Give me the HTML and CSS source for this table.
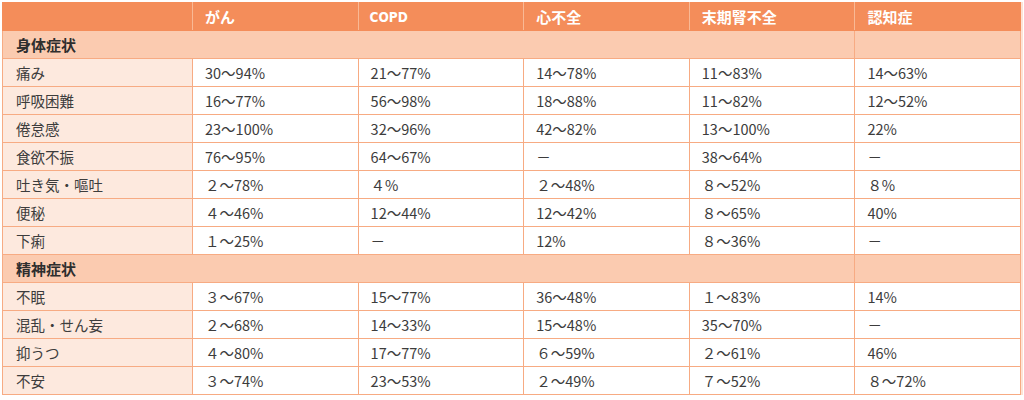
FILE: index.html
```html
<!DOCTYPE html>
<html lang="ja">
<head>
<meta charset="utf-8">
<link rel="stylesheet" href="styles.css">
</head>
<body>
<table class="symptoms">
  <colgroup>
    <col class="c-label"><col class="c-val"><col class="c-val"><col class="c-val"><col class="c-val"><col class="c-val">
  </colgroup>
  <thead>
    <tr class="head">
      <th></th><th>がん</th><th class="latin">COPD</th><th>心不全</th><th>末期腎不全</th><th>認知症</th>
    </tr>
  </thead>
  <tbody>
    <tr class="cat"><td colspan="5">身体症状</td><td></td></tr>
    <tr><td class="lbl">痛み</td><td>30〜94%</td><td>21〜77%</td><td>14〜78%</td><td>11〜83%</td><td>14〜63%</td></tr>
    <tr><td class="lbl">呼吸困難</td><td>16〜77%</td><td>56〜98%</td><td>18〜88%</td><td>11〜82%</td><td>12〜52%</td></tr>
    <tr><td class="lbl">倦怠感</td><td>23〜100%</td><td>32〜96%</td><td>42〜82%</td><td>13〜100%</td><td>22%</td></tr>
    <tr><td class="lbl">食欲不振</td><td>76〜95%</td><td>64〜67%</td><td>－</td><td>38〜64%</td><td>－</td></tr>
    <tr><td class="lbl">吐き気・嘔吐</td><td>２〜78%</td><td>４%</td><td>２〜48%</td><td>８〜52%</td><td>８%</td></tr>
    <tr><td class="lbl">便秘</td><td>４〜46%</td><td>12〜44%</td><td>12〜42%</td><td>８〜65%</td><td>40%</td></tr>
    <tr><td class="lbl">下痢</td><td>１〜25%</td><td>－</td><td>12%</td><td>８〜36%</td><td>－</td></tr>
    <tr class="cat"><td colspan="5">精神症状</td><td></td></tr>
    <tr><td class="lbl">不眠</td><td>３〜67%</td><td>15〜77%</td><td>36〜48%</td><td>１〜83%</td><td>14%</td></tr>
    <tr><td class="lbl">混乱・せん妄</td><td>２〜68%</td><td>14〜33%</td><td>15〜48%</td><td>35〜70%</td><td>－</td></tr>
    <tr><td class="lbl">抑うつ</td><td>４〜80%</td><td>17〜77%</td><td>６〜59%</td><td>２〜61%</td><td>46%</td></tr>
    <tr><td class="lbl">不安</td><td>３〜74%</td><td>23〜53%</td><td>２〜49%</td><td>７〜52%</td><td>８〜72%</td></tr>
  </tbody>
</table>
</body>
</html>
```

FILE: styles.css
```css
html, body {
  margin: 0;
  padding: 0;
  background: #ffffff;
}
body {
  padding: 2px 0 0 2px;
  font-family: "Noto Sans CJK JP", "Noto Sans", sans-serif;
  font-size: 14.5px;
  color: #3c3c3c;
}
.symptoms {
  border-collapse: collapse;
  table-layout: fixed;
  width: 1018px;
  box-shadow: 2px 0 0 #fde3d6;
}
.c-label { width: 190px; }
.c-val { width: 165.6px; }
.symptoms th,
.symptoms td {
  height: 27px;
  padding: 0 0 0 12px;
  border: 1px solid #f7ab83;
  text-align: left;
  vertical-align: middle;
  line-height: 20px;
  white-space: nowrap;
  background: #ffffff;
}
.symptoms .head th {
  background: #f48d5a;
  color: #ffffff;
  font-weight: 700;
  font-size: 15px;
  border-color: #f48d5a;
  border-left-color: #f9b995;
  border-right-color: #f9b995;
  padding-left: 12px;
}
.symptoms .head th:first-child { border-left-color: #f48d5a; }
.symptoms .head th:last-child { border-right-color: #f48d5a; }
.symptoms .head th.latin {
  font-family: "DejaVu Sans Condensed", "DejaVu Sans", sans-serif;
  font-stretch: condensed;
  font-size: 13.5px;
  letter-spacing: 0;
  padding-left: 11px;
}
.symptoms .cat td {
  background: #fbcbb0;
  font-weight: 700;
  font-size: 15px;
  padding-left: 13px;
  color: #2e2e2e;
}
.symptoms td.lbl {
  background: #fde9de;
  padding-left: 13px;
}
```
